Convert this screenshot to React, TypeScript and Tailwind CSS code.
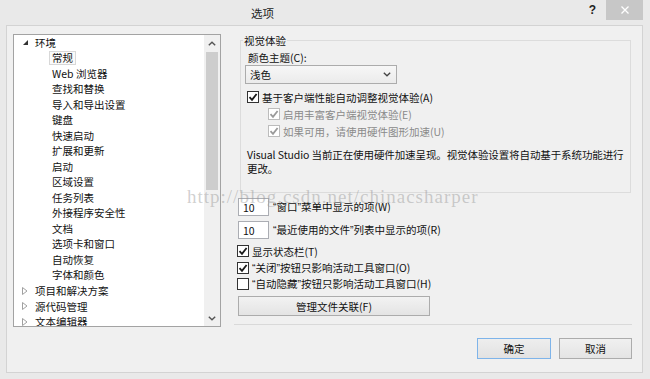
import React from "react";

type TreeItem = { label: string; level: 0 | 1; state?: "open" | "closed"; selected?: boolean };

const treeItems: TreeItem[] = [
  { label: "环境", level: 0, state: "open" },
  { label: "常规", level: 1, selected: true },
  { label: "Web 浏览器", level: 1 },
  { label: "查找和替换", level: 1 },
  { label: "导入和导出设置", level: 1 },
  { label: "键盘", level: 1 },
  { label: "快速启动", level: 1 },
  { label: "扩展和更新", level: 1 },
  { label: "启动", level: 1 },
  { label: "区域设置", level: 1 },
  { label: "任务列表", level: 1 },
  { label: "外接程序安全性", level: 1 },
  { label: "文档", level: 1 },
  { label: "选项卡和窗口", level: 1 },
  { label: "自动恢复", level: 1 },
  { label: "字体和颜色", level: 1 },
  { label: "项目和解决方案", level: 0, state: "closed" },
  { label: "源代码管理", level: 0, state: "closed" },
  { label: "文本编辑器", level: 0, state: "closed" },
];

// narrow latin quote marks, as the dialog font draws them
function Q({ c }: { c: string }) {
  return <span className="font-['Liberation_Sans',sans-serif]">{c}</span>;
}

function CheckBox({ checked, disabled }: { checked?: boolean; disabled?: boolean }) {
  return (
    <span
      className={
        "w-[12px] h-[12px] shrink-0 border bg-white flex items-center justify-center " +
        (disabled ? "border-[#bcbcbc]" : "border-[#333333]")
      }
    >
      {checked && (
        <svg width="10" height="10" viewBox="0 0 10 10">
          <path
            d="M1.5 5.2 L4 7.8 L8.6 2"
            fill="none"
            stroke={disabled ? "#9a9a9a" : "#1a1a1a"}
            strokeWidth="1.8"
          />
        </svg>
      )}
    </span>
  );
}

function CheckRow({
  children,
  checked,
  disabled,
  className,
}: {
  children: React.ReactNode;
  checked?: boolean;
  disabled?: boolean;
  className?: string;
}) {
  return (
    <div className={"flex items-center h-[14px] gap-[3px] " + (className || "")}>
      <CheckBox checked={checked} disabled={disabled} />
      <span className={disabled ? "text-[#8a8a8a]" : "text-[#111]"}>{children}</span>
    </div>
  );
}

function Tree() {
  return (
    <div className="w-[208px] h-[293px] border border-[#a3a3a3] bg-white flex overflow-hidden">
      <div className="flex-1 flex flex-col">
        {treeItems.map((item) => (
          <div key={item.label} className="h-[15.5px] shrink-0 flex items-center">
            {item.level === 0 ? (
              <>
                <span className="w-[21px] flex justify-end pr-[7px]">
                  {item.state === "open" ? (
                    <svg width="5" height="5" viewBox="0 0 5 5">
                      <path d="M5 0 L5 5 L0 5 Z" fill="#333" />
                    </svg>
                  ) : (
                    <svg width="6" height="8" viewBox="0 0 6 8">
                      <path d="M0.5 0.5 L5 4 L0.5 7.5 Z" fill="none" stroke="#a0a0a0" />
                    </svg>
                  )}
                </span>
                <span className="text-[#111]">{item.label}</span>
              </>
            ) : (
              <span
                className={
                  "ml-[35px] px-[2px] leading-[12px] border " +
                  (item.selected ? "border-[#d8d8d8] bg-[#fafafa]" : "border-transparent")
                }
              >
                {item.label}
              </span>
            )}
          </div>
        ))}
      </div>
      <div className="w-[16px] bg-[#f0f0f0] flex flex-col items-center">
        <div className="h-[16px] flex items-center justify-center">
          <svg width="8" height="5" viewBox="0 0 8 5">
            <path d="M0.8 4.3 L4 1.2 L7.2 4.3" fill="none" stroke="#555" strokeWidth="1.4" />
          </svg>
        </div>
        <div className="mt-[1px] w-[12px] h-[138px] bg-[#cdcdcd]" />
        <div className="flex-1" />
        <div className="h-[16px] flex items-center justify-center">
          <svg width="8" height="5" viewBox="0 0 8 5">
            <path d="M0.8 0.7 L4 3.8 L7.2 0.7" fill="none" stroke="#555" strokeWidth="1.4" />
          </svg>
        </div>
      </div>
    </div>
  );
}

export default function App() {
  return (
    <div className="w-[650px] h-[379px] bg-[#e9e9e9] flex flex-col relative overflow-hidden text-[10.5px] leading-[13px] text-[#111] font-['Noto_Sans_CJK_SC',sans-serif]">
      {/* title bar */}
      <div className="h-[25px] flex items-start shrink-0">
        <span className="ml-[251px] mt-[6px] text-[11.5px] leading-[14px] text-[#222]">选项</span>
        <div className="flex-1" />
        <span className="mt-[3px] mr-[10px] text-[12px] font-bold leading-[14px] text-[#222] font-['Liberation_Sans',sans-serif]">
          ?
        </span>
        <div className="w-[37px] h-[20px] bg-[#c7c7c7] mr-[7px] flex items-center justify-center">
          <svg width="8" height="8" viewBox="0 0 8 8">
            <path d="M0.5 0.5 L7.5 7.5 M7.5 0.5 L0.5 7.5" stroke="#fff" strokeWidth="1.3" />
          </svg>
        </div>
      </div>

      {/* dialog frame */}
      <div className="ml-[6px] w-[637px] h-[348px] border border-[#d3d3d3] bg-[#f0f0f0] flex flex-col">
        <div className="flex pl-[6px] pt-[8px]">
          <Tree />

          <div className="ml-[13px] w-[398px] flex flex-col">
            <fieldset className="ml-[6px] w-[391px] border border-[#dcdcdc] pb-[17px]">
              <legend className="ml-[2px] px-[1px] leading-[13px] text-[#111]">视觉体验</legend>
              <div className="mt-[4px] ml-[7px] leading-[13px]">颜色主题(C):</div>
              <div className="mt-[1px] ml-[4px] w-[152px] h-[19px] border border-[#acacac] bg-gradient-to-b from-[#f7f7f7] to-[#ebebeb] flex items-center pl-[4px] pr-[5px]">
                <span className="flex-1">浅色</span>
                <svg width="8" height="5" viewBox="0 0 8 5">
                  <path d="M0.8 0.7 L4 3.8 L7.2 0.7" fill="none" stroke="#444" strokeWidth="1.3" />
                </svg>
              </div>
              <CheckRow className="mt-[6px] ml-[6px]" checked>
                基于客户端性能自动调整视觉体验(A)
              </CheckRow>
              <CheckRow className="mt-[3px] ml-[27px]" checked disabled>
                启用丰富客户端视觉体验(E)
              </CheckRow>
              <CheckRow className="mt-[3px] ml-[27px]" checked disabled>
                如果可用，请使用硬件图形加速(U)
              </CheckRow>
              <p className="mt-[10px] ml-[6px] leading-[13.5px] whitespace-nowrap tracking-[-0.1px]">
                Visual Studio 当前正在使用硬件加速呈现。视觉体验设置将自动基于系统功能进行
                <br />
                更改。
              </p>
            </fieldset>

            <div className="mt-[5px] ml-[4px] flex items-center gap-[4px]">
              <div className="w-[31px] h-[18px] border border-[#abadb3] bg-white pl-[4px] flex items-center">10</div>
              <span>
                <Q c="“" />窗口<Q c="”" />菜单中显示的项(W)
              </span>
            </div>
            <div className="mt-[5px] ml-[4px] flex items-center gap-[4px]">
              <div className="w-[31px] h-[18px] border border-[#abadb3] bg-white pl-[4px] flex items-center">10</div>
              <span>
                <Q c="“" />最近使用的文件<Q c="”" />列表中显示的项(R)
              </span>
            </div>

            <CheckRow className="mt-[5px] ml-[3px]" checked>
              显示状态栏(T)
            </CheckRow>
            <CheckRow className="mt-[3px] ml-[3px]" checked>
              <Q c="“" />关闭<Q c="”" />按钮只影响活动工具窗口(O)
            </CheckRow>
            <CheckRow className="mt-[2px] ml-[3px]">
              <Q c="“" />自动隐藏<Q c="”" />按钮只影响活动工具窗口(H)
            </CheckRow>

            <button className="mt-[5px] ml-[4px] w-[192px] h-[20px] border border-[#acacac] bg-gradient-to-b from-[#f2f2f2] to-[#e4e4e4] flex items-center justify-center">
              管理文件关联(F)
            </button>

            <div className="mt-[8px] h-px bg-[#d9d9d9]" />
          </div>
        </div>

        <div className="mt-[11px] flex justify-end gap-[8px] pr-[10px]">
          <button className="w-[74px] h-[21px] border border-[#7eb4ea] bg-gradient-to-b from-[#eeeeee] to-[#e2e2e2] flex items-center justify-center">
            确定
          </button>
          <button className="w-[73px] h-[21px] border border-[#acacac] bg-gradient-to-b from-[#f0f0f0] to-[#e4e4e4] flex items-center justify-center">
            取消
          </button>
        </div>
      </div>

      {/* blog watermark lying over the dialog */}
      <div className="absolute left-[187px] top-[187px] pointer-events-none text-[19px] leading-[19px] tracking-[1px] text-[rgba(150,150,150,0.45)] font-['Liberation_Serif',serif] whitespace-nowrap">
        http://blog.csdn.net/chinacsharper
      </div>
    </div>
  );
}
